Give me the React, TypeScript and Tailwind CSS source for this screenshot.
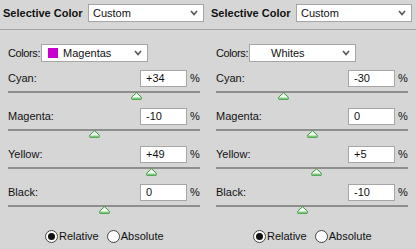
import React from 'react';

interface Channel {
  name: string;
  value: number;
}

interface Panel {
  color: string;
  swatch: string | null;
  channels: Channel[];
}

const panels: Panel[] = [
  {
    color: 'Magentas',
    swatch: '#cc00cc',
    channels: [
      { name: 'Cyan:', value: 34 },
      { name: 'Magenta:', value: -10 },
      { name: 'Yellow:', value: 49 },
      { name: 'Black:', value: 0 },
    ],
  },
  {
    color: 'Whites',
    swatch: null,
    channels: [
      { name: 'Cyan:', value: -30 },
      { name: 'Magenta:', value: 0 },
      { name: 'Yellow:', value: 5 },
      { name: 'Black:', value: -10 },
    ],
  },
];

const fmt = (v: number) => (v > 0 ? `+${v}` : `${v}`);

function Chevron() {
  return (
    <svg width="8" height="6" viewBox="0 0 8 6" className="shrink-0">
      <polyline points="1,1 4,4.5 7,1" fill="none" stroke="#555" strokeWidth="1.6" />
    </svg>
  );
}

function Thumb() {
  return (
    <svg width="11" height="8" viewBox="0 0 11 8">
      <polygon points="5.5,0.8 10.2,5 10.2,7.3 0.8,7.3 0.8,5" fill="#f4fbf4" stroke="#3a9a3a" strokeWidth="1" />
      <rect x="1.3" y="5.6" width="8.4" height="1.4" fill="#7cc77c" />
    </svg>
  );
}

function Radio({ checked, label }: { checked: boolean; label: string }) {
  return (
    <div className="flex items-center">
      <div className="w-[13px] h-[13px] rounded-full border border-[#444] bg-white flex items-center justify-center">
        {checked && <div className="w-[7px] h-[7px] rounded-full bg-[#111]" />}
      </div>
      <span className="ml-[1px] text-[11px] text-[#111]">{label}</span>
    </div>
  );
}

function SelectivePanel({ panel }: { panel: Panel }) {
  return (
    <div className="w-[208px] flex flex-col">
      {/* header */}
      <div className="h-[30px] flex items-start pt-[4px] border-b border-[#a3a3a3]">
        <div className="w-[88px] pl-[3px] h-[18px] flex items-center text-[11px] font-bold text-[#111] whitespace-nowrap">
          Selective Color
        </div>
        <div className="w-[116px] h-[18px] bg-white border border-[#a6a6a6] flex items-center pl-[4px] pr-[5px]">
          <span className="flex-1 text-[11px] text-[#111]">Custom</span>
          <Chevron />
        </div>
      </div>

      {/* colors */}
      <div className="mt-[14px] h-[18px] flex items-center">
        <span className="w-[41px] shrink-0 pl-[8px] text-[11px] tracking-[-0.4px] text-[#111] whitespace-nowrap">Colors:</span>
        <div className="w-[107px] h-[18px] bg-white border border-[#a6a6a6] flex items-center pl-[6px] pr-[5px]">
          <div className={`w-[10px] h-[10px] ${panel.swatch ? 'bg-[#cc00cc]' : ''}`} />
          <span className="ml-[5px] flex-1 text-[11px] text-[#111]">{panel.color}</span>
          <Chevron />
        </div>
      </div>

      {/* sliders */}
      <div className="mt-[8px] flex flex-col">
        {panel.channels.map((c) => (
          <div key={c.name} className="h-[38px] flex flex-col">
            <div className="h-[17px] flex items-center pr-[8px]">
              <span className="flex-1 pl-[8px] text-[11px] text-[#111]">{c.name}</span>
              <div className="w-[47px] h-[17px] bg-white border border-[#a6a6a6] flex items-center pl-[5px] text-[11px] text-[#111]">
                {fmt(c.value)}
              </div>
              <span className="w-[13px] pl-[3px] text-[11px] text-[#111]">%</span>
            </div>
            <div className="mt-[4px] ml-[8px] w-[192px] h-[2px] bg-[#8e8e8e] relative">
              <div
                className="absolute top-[1px]"
                style={{ left: 96 + (c.value / 100) * 96 - 5.5 }}
              >
                <Thumb />
              </div>
            </div>
          </div>
        ))}
      </div>

      {/* mode */}
      <div className="mt-[6px] pl-[45px] flex items-center gap-[8px]">
        <Radio checked label="Relative" />
        <Radio checked={false} label="Absolute" />
      </div>
    </div>
  );
}

export default function App() {
  return (
    <div
      className="w-[416px] h-[249px] bg-[#d6d6d6] flex overflow-hidden"
      style={{ fontFamily: '"Liberation Sans", Arial, sans-serif' }}
    >
      {panels.map((p, i) => (
        <SelectivePanel key={i} panel={p} />
      ))}
    </div>
  );
}
